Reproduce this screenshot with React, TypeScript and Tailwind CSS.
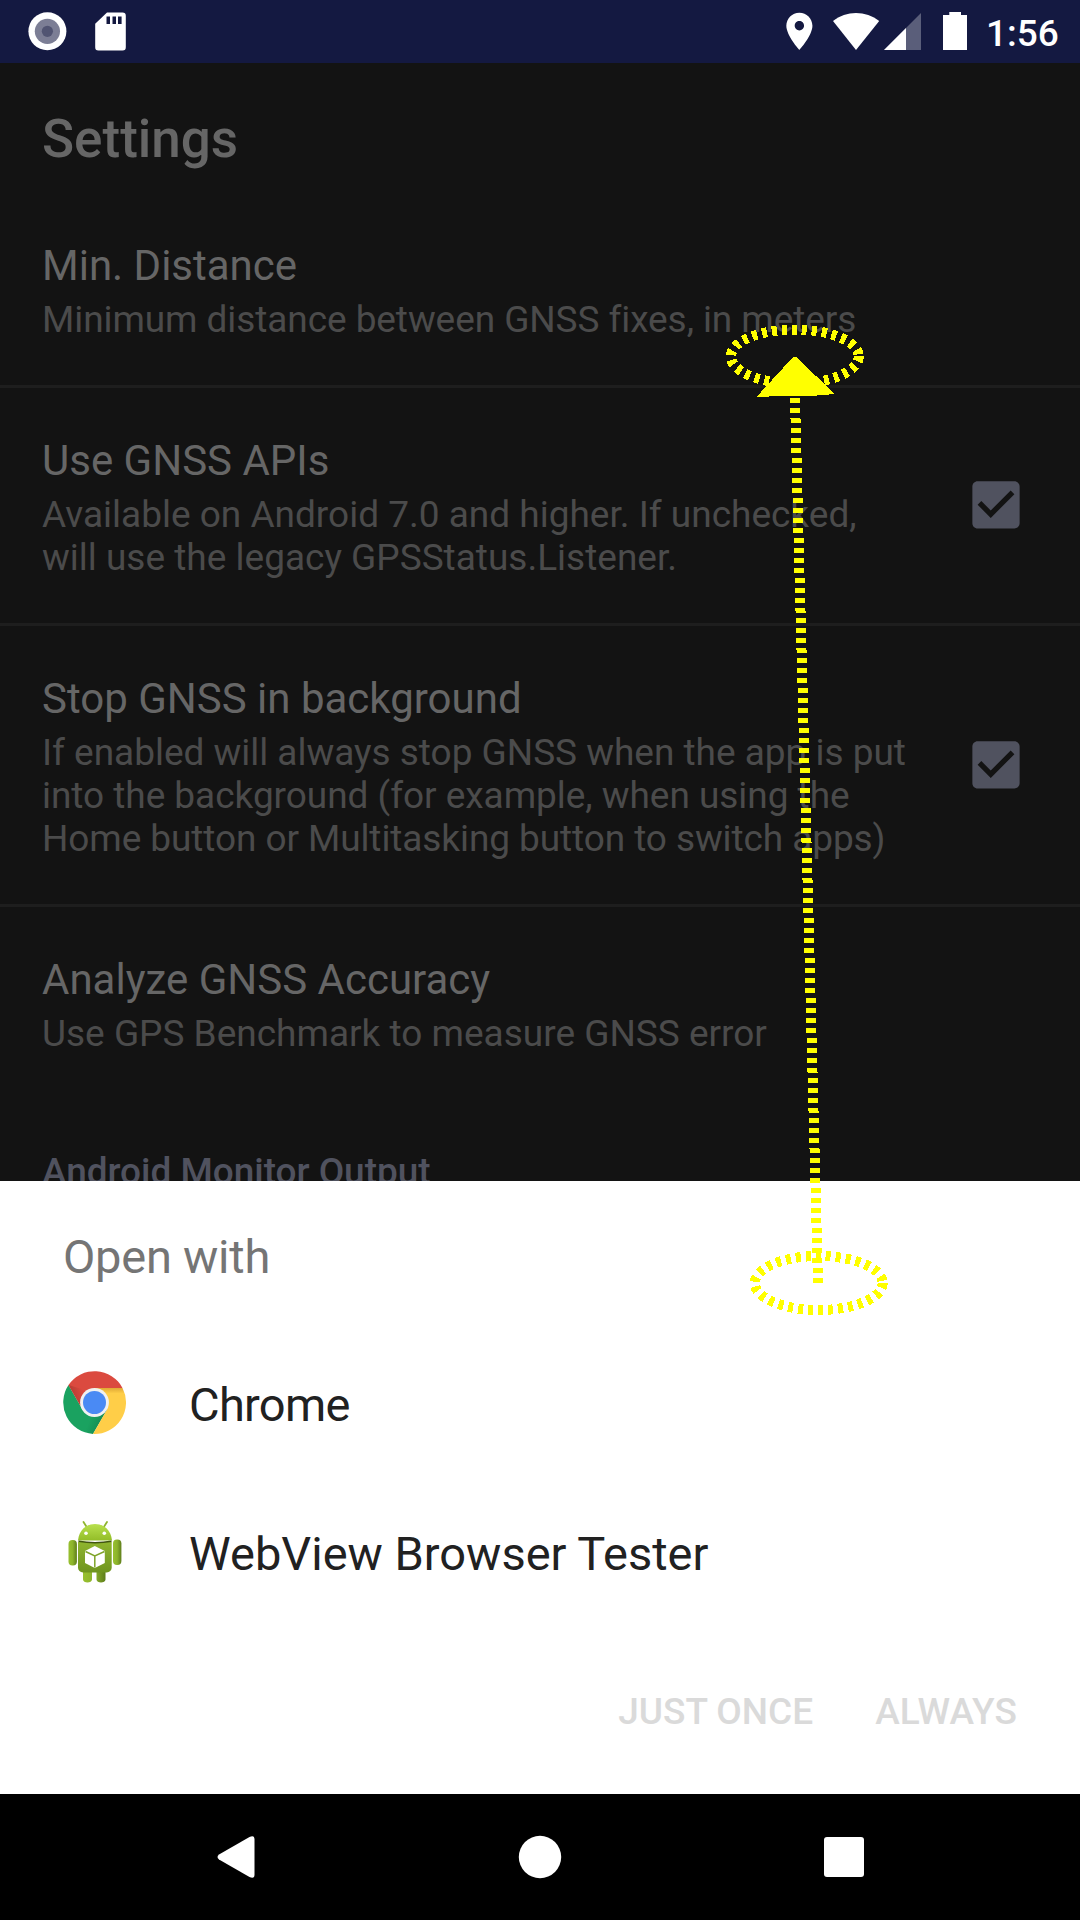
import React from "react";

function StatusBar() {
  return (
    <header className="h-[63px] shrink-0 bg-[#141941] flex text-white">
      <svg width="140" height="63" viewBox="0 0 140 63" className="shrink-0">
        <circle cx="47.4" cy="31.3" r="19" fill="#fff" />
        <circle cx="47.4" cy="31.3" r="12.6" fill="#7c7e95" />
        <circle cx="47.4" cy="31.3" r="5.6" fill="#515472" />
        <path
          fill="#fff"
          fillRule="evenodd"
          d="M107 12.5H122.500a3.300 3.300 0 0 1 3.300 3.300V47a3.300 3.300 0 0 1-3.300 3.500H98.500a3.300 3.300 0 0 1-3.300-3.500V23.800ZM106.500 16.500V24H110V16.500ZM112.500 16.500V24H116V16.500ZM118 16.500V24H121.600V16.500Z"
        />
      </svg>
      <div className="flex-1" />
      <svg width="208" height="63" viewBox="770 0 208 63" className="shrink-0" fill="#fff">
        <path
          transform="translate(777 9) scale(1.865)"
          d="M12 2C8.130 2 5 5.130 5 9c0 5.250 7 13 7 13s7-7.750 7-13c0-3.870-3.130-7-7-7zm0 9.500c-1.380 0-2.500-1.120-2.500-2.500s1.120-2.500 2.500-2.500 2.500 1.120 2.500 2.500-1.120 2.500-2.500 2.500z"
        />
        <path d="M833 21C846 10.200 866 10.200 879.200 21L856 50Z" />
        <path d="M884 50L921 13V50Z" opacity="0.3" />
        <path d="M884 50L906 28V50Z" />
        <path d="M949.300 12H961V15H967V50H943V15H949.300Z" />
      </svg>
      <span className="w-[102px] pl-[8px] pt-[12px] text-[37px] leading-[43px] font-medium">1:56</span>
    </header>
  );
}

function CheckBox() {
  return (
    <svg width="64" height="64" viewBox="-0.19 -0.1 24.38 24.38" className="shrink-0 self-center mb-px">
      <path
        fill="#50525f"
        d="M19 3H5c-1.110 0-2 .9-2 2v14c0 1.100.89 2 2 2h14c1.110 0 2-.9 2-2V5c0-1.100-.89-2-2-2zm-9 14l-5-5 1.410-1.410L10 14.170l7.590-7.590L19 8l-9 9z"
      />
    </svg>
  );
}

type RowProps = { title: string; lines: [text: string, tracking: string][]; frame: string; checked?: boolean };

function SettingRow({ title, lines, frame, checked }: RowProps) {
  return (
    <div className={`${frame} flex pl-[42px] pr-[52px] border-[#1e1e1e]`}>
      <div className="flex-1 whitespace-nowrap">
        <div className="mb-2 text-[42px] leading-[49px] text-[#666]">{title}</div>
        {lines.map(([text, tracking]) => (
          <div key={text} className={`text-[37px] leading-[43px] text-[#4b4b4b] ${tracking}`}>
            {text}
          </div>
        ))}
      </div>
      {checked && <CheckBox />}
    </div>
  );
}

function ChromeIcon() {
  return (
    <svg width="63" height="63" viewBox="-31.5 -31.5 63 63" className="shrink-0">
      <defs>
        <linearGradient id="redShade" x1="0" y1="0.4" x2="1" y2="0">
          <stop offset="0" stopColor="#b03a30" />
          <stop offset="0.75" stopColor="#db4a3f" />
        </linearGradient>
        <linearGradient id="greenShade" x1="0.1" y1="0.5" x2="1" y2="0.9">
          <stop offset="0.55" stopColor="#1aa260" />
          <stop offset="1" stopColor="#12804c" />
        </linearGradient>
        <linearGradient id="yellowShade" x1="0" y1="0" x2="0" y2="1">
          <stop offset="0" stopColor="#dfa835" />
          <stop offset="0.12" stopColor="#ffce48" />
        </linearGradient>
      </defs>
      <path fill="url(#greenShade)" d="M-26-17.500A31.500 31.500 0 0 0-1.500 31.400L13 6.500-12 7Z" />
      <path fill="url(#yellowShade)" d="M0-14.500H28A31.500 31.500 0 0 1-1.500 31.400L12.500 7Z" />
      <path fill="#db4a3f" d="M-26-17.500A31.500 31.500 0 0 1 28-14.500H0L-14 3Z" />
      <path fill="url(#redShade)" d="M-26-17.500L-14 3.500-8-12Z" />
      <circle r="14.400" fill="#f1f1f1" />
      <circle r="11.500" fill="#4a8af4" />
    </svg>
  );
}

function AndroidIcon() {
  return (
    <svg width="63" height="63" viewBox="63 1519.500 63 63" className="shrink-0 overflow-visible">
      <defs>
        <linearGradient id="bodyGreen" x1="0" y1="0" x2="0" y2="1">
          <stop offset="0" stopColor="#8fb52e" />
          <stop offset="1" stopColor="#6f9420" />
        </linearGradient>
        <linearGradient id="headGreen" x1="0" y1="0" x2="0" y2="1">
          <stop offset="0" stopColor="#b8e04e" />
          <stop offset="1" stopColor="#93bd28" />
        </linearGradient>
        <linearGradient id="limb" x1="0" y1="0" x2="1" y2="0">
          <stop offset="0" stopColor="#98c02f" />
          <stop offset="0.5" stopColor="#8cb32b" />
          <stop offset="1" stopColor="#5e7d1b" />
        </linearGradient>
      </defs>
      <path d="M87 1527L83.500 1521.500M103.500 1527L107 1521.500" stroke="#8fb52e" strokeWidth="1.800" strokeLinecap="round" />
      <path d="M83 1568H92V1579C92 1583 83 1583 83 1579ZM96.500 1568H105.500V1579C105.500 1583 96.500 1583 96.500 1579Z" fill="url(#limb)" />
      <rect x="68.500" y="1539.500" width="8.400" height="25.500" rx="4" fill="url(#limb)" />
      <rect x="113" y="1539" width="8.400" height="25.500" rx="4" fill="url(#limb)" />
      <path d="M78 1540C79 1529.500 86 1523.500 95 1523.500S111 1529.500 112 1540Z" fill="url(#headGreen)" />
      <path d="M78 1541.500H111.700V1567A5 5 0 0 1 106.700 1572H83A5 5 0 0 1 78 1567Z" fill="url(#bodyGreen)" />
      <path d="M78.500 1540.800Q95 1543.500 111.500 1540.800" stroke="#40560f" strokeWidth="1.500" fill="none" />
      <circle cx="86" cy="1532.700" r="1.800" fill="#fff" />
      <circle cx="104.300" cy="1532.700" r="1.800" fill="#fff" />
      <path d="M94.800 1545.500L104.800 1550.500V1562.500L94.800 1567.500L85 1562.500V1550.500Z" fill="#fff" />
      <path d="M85.500 1551L94.800 1555.500L104.500 1551M94.800 1555.500V1567" stroke="#7fa42a" strokeWidth="1.500" fill="none" />
    </svg>
  );
}

function Chooser() {
  return (
    <section className="h-[613px] shrink-0 bg-white flex flex-col">
      <h2 className="h-[147px] pl-[63px] pt-[48px] text-[47px] leading-[56px] tracking-[-0.250px] text-[#757575]">Open with</h2>
      <div className="h-[149px] flex items-center gap-[63px] pl-[63px]">
        <ChromeIcon />
        <span className="text-[47px] leading-[56px] tracking-[-0.700px] text-[#212121] pt-[4px]">Chrome</span>
      </div>
      <div className="h-[149px] flex items-center gap-[63px] pl-[63px]">
        <AndroidIcon />
        <span className="text-[47px] leading-[56px] text-[#212121] pt-[4px]">WebView Browser Tester</span>
      </div>
      <div className="flex-1 flex justify-end gap-[62px] pr-[63px] pt-[64px] text-[37px] leading-[43px] font-medium text-[#dadada]">
        <span>JUST ONCE</span>
        <span className="tracking-[0.100px]">ALWAYS</span>
      </div>
    </section>
  );
}

function NavBar() {
  return (
    <nav className="h-[126px] shrink-0 bg-black">
      <svg width="1080" height="126" viewBox="0 1794 1080 126" fill="#fff">
        <path d="M219 1854.500L249.500 1837Q254.500 1834.500 254.500 1839.500V1874.500Q254.500 1879.500 249.500 1877L219 1859.500Q216 1857 219 1854.500Z" />
        <circle cx="540" cy="1857" r="21.200" />
        <rect x="824" y="1837" width="40" height="40" rx="3" />
      </svg>
    </nav>
  );
}

function SwipeOverlay() {
  return (
    <svg
      width="1080"
      height="1920"
      viewBox="0 0 1080 1920"
      className="absolute left-0 top-0 pointer-events-none"
      shapeRendering="crispEdges"
      fill="none"
      stroke="#ff0"
      strokeWidth="10"
      strokeDasharray="5 5"
    >
      <ellipse cx="794.800" cy="356.500" rx="64" ry="27" />
      <ellipse cx="818.700" cy="1283" rx="64" ry="27" />
      <path d="M818 1283L794.500 380" />
      <path d="M793.500 356.500L796 356.500L834.500 394L817 395.500L775 396L756 397.500Z" fill="#ff0" stroke="none" />
    </svg>
  );
}

export default function App() {
  return (
    <div className="relative w-[1080px] h-[1920px] overflow-hidden flex flex-col bg-[#131313] font-[Roboto,sans-serif]">
      <StatusBar />
      <main className="h-[1118px] shrink-0 overflow-hidden bg-[#131313]">
        <h1 className="h-[147px] pl-[42px] pt-[45px] text-[53px] leading-[62px] font-medium text-[#666]">Settings</h1>
        <SettingRow
          frame="h-[178px] pt-[31px] border-b-[3px]"
          title="Min. Distance"
          lines={[["Minimum distance between GNSS fixes, in meters", "tracking-[-0.080px]"]]}
        />
        <SettingRow
          frame="h-[238px] border-b-[3px] [&>div]:pt-12"
          title="Use GNSS APIs"
          lines={[
            ["Available on Android 7.0 and higher. If unchecked,", "tracking-normal"],
            ["will use the legacy GPSStatus.Listener.", "tracking-normal"],
          ]}
          checked
        />
        <SettingRow
          frame="h-[281px] border-b-[3px] [&>div]:pt-12"
          title="Stop GNSS in background"
          lines={[
            ["If enabled will always stop GNSS when the app is put", "tracking-[-0.020px]"],
            ["into the background (for example, when using the", "tracking-[-0.040px]"],
            ["Home button or Multitasking button to switch apps)", "tracking-[-0.090px]"],
          ]}
          checked
        />
        <SettingRow
          frame="h-[195px] pt-12"
          title="Analyze GNSS Accuracy"
          lines={[["Use GPS Benchmark to measure GNSS error", "tracking-normal"]]}
        />
        <div className="pl-[42px] pt-12 text-[37px] leading-[43px] tracking-[-0.040px] font-medium text-[#50525f]">
          Android Monitor Output
        </div>
      </main>
      <Chooser />
      <NavBar />
      <SwipeOverlay />
    </div>
  );
}
